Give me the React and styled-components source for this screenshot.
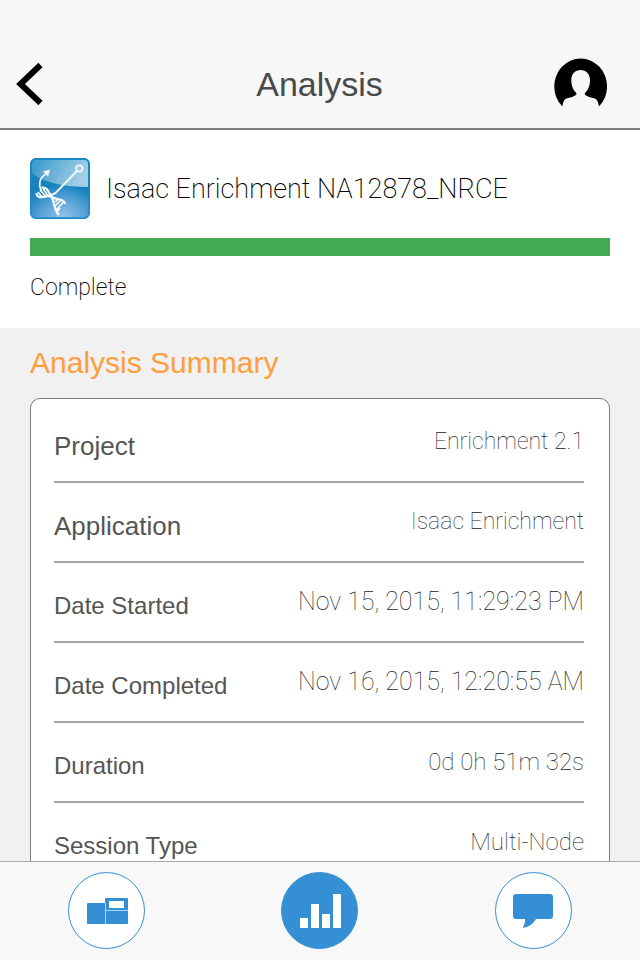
import React from 'react';
import styled, { createGlobalStyle } from 'styled-components';

const details = [
  { label: 'Project', value: 'Enrichment 2.1', kind: 'name' },
  { label: 'Application', value: 'Isaac Enrichment', kind: 'name' },
  { label: 'Date Started', value: 'Nov 15, 2015, 11:29:23 PM', kind: 'date' },
  { label: 'Date Completed', value: 'Nov 16, 2015, 12:20:55 AM', kind: 'date' },
  { label: 'Duration', value: '0d 0h 51m 32s', kind: 'text' },
  { label: 'Session Type', value: 'Multi-Node', kind: 'text' },
];

const valueSizes = { name: '23px', date: '25px', text: '24px' };

export default function App() {
  return (
    <Screen>
      <GlobalStyle />

      <Header>
        <HeaderButton aria-label="Back">
          <BackIcon />
        </HeaderButton>
        <Title>Analysis</Title>
        <HeaderButton aria-label="Account">
          <AccountIcon />
        </HeaderButton>
      </Header>

      <Content>
        <Overview>
          <AppRow>
            <EnrichmentIcon />
            <AppName>Isaac Enrichment NA12878_NRCE</AppName>
          </AppRow>
          <Progress
            role="progressbar"
            aria-label="Analysis progress"
            aria-valuenow={100}
          />
          <Status>Complete</Status>
        </Overview>

        <Summary>
          <SummaryTitle>Analysis Summary</SummaryTitle>
          <Card>
            {details.map(({ label, value, kind }) => (
              <Row key={label}>
                <Label $large={kind === 'name'}>{label}</Label>
                <Value $kind={kind}>{value}</Value>
              </Row>
            ))}
          </Card>
        </Summary>
      </Content>

      <TabBar>
        <Tab aria-label="Instruments">
          <InstrumentIcon />
        </Tab>
        <Tab aria-label="Analyses" $active>
          <ChartIcon />
        </Tab>
        <Tab aria-label="Messages">
          <MessageIcon />
        </Tab>
      </TabBar>
    </Screen>
  );
}

function BackIcon() {
  return (
    <svg width="28" height="44" viewBox="0 0 28 44">
      <path
        d="M24.500 4 L4.500 23 L24.500 42"
        fill="none"
        stroke="#000"
        strokeWidth="6"
      />
    </svg>
  );
}

function AccountIcon() {
  return (
    <svg width="53" height="50" viewBox="0 0 53 50">
      <path d="M8.300 48.600 A26.400 28 0 1 1 45 48.600 C44.500 45 43.500 42 41.500 40.800 C38 39.500 33.500 39.300 31 36.600 C30.600 35.800 30.800 35 31.600 34.300 C34.500 31.500 36 27 36 22.500 C36 15.500 32 12 26.600 12 C21.200 12 17.300 15.500 17.300 22.500 C17.300 27 18.800 31.500 21.600 34.300 C22.500 35 22.700 35.800 22.200 36.600 C19.700 39.300 15.200 39.500 11.800 40.800 C9.800 42 8.800 45 8.300 48.600 Z" />
    </svg>
  );
}

function EnrichmentIcon() {
  return (
    <svg width="60" height="61" viewBox="0 0 60 61">
      <defs>
        <linearGradient id="tile" x1="0" y1="0" x2="0" y2="1">
          <stop offset="0" stopColor="#1b8cc4" />
          <stop offset="0.5" stopColor="#1682bd" />
          <stop offset="1" stopColor="#3f92ce" />
        </linearGradient>
        <radialGradient id="glow" cx="0.55" cy="1" r="0.6">
          <stop offset="0" stopColor="#9cc8ee" stopOpacity="0.9" />
          <stop offset="1" stopColor="#9cc8ee" stopOpacity="0" />
        </radialGradient>
        <linearGradient id="gloss" x1="0" y1="0" x2="1" y2="0.3">
          <stop offset="0" stopColor="#fff" stopOpacity="0.12" />
          <stop offset="1" stopColor="#fff" stopOpacity="0.6" />
        </linearGradient>
      </defs>
      <rect width="60" height="61" rx="6" fill="url(#tile)" />
      <rect x="2" y="2" width="56" height="57" rx="5" fill="url(#glow)" />
      <path
        d="M6 2 H54 Q58 2 58 6 V29 C35 29 14 25 2 15 V6 Q2 2 6 2 Z"
        fill="url(#gloss)"
      />
      <rect
        x="0.500"
        y="0.500"
        width="59"
        height="60"
        rx="6"
        fill="none"
        stroke="#1a88c6"
      />
      <g fill="none" stroke="#f4f6f8" strokeWidth="1.800">
        <circle cx="49.300" cy="10.500" r="3.200" />
        <path d="M47 13 L26 34.500 Q23 37.500 19 36" />
        <path d="M11.500 33 C8 27 9 20 16.500 15.500" strokeWidth="1.600" />
      </g>
      <path d="M20 11.500 L12.500 13.500 L16 15.500 L18 19 Z" fill="#f4f6f8" />
      <g fill="none" stroke="#fff" strokeWidth="2.200">
        <path d="M6.500 35 C7 42 14 38 19 38 C26 39 22 51 29 57" />
        <path d="M11.500 29.500 C19 29 18 36 22 39 C26 42 34 40 35 46" />
        <path
          d="M8 34 L12 39 M10 32 L16 38.500 M13 30.500 L18 38 M25.500 44 L28 41 M25 48 L31 42 M26 52 L33.500 44 M27 54 L30 50"
          strokeWidth="1.500"
        />
      </g>
    </svg>
  );
}

function InstrumentIcon() {
  return (
    <svg width="42" height="26" viewBox="0 0 42 26">
      <rect x="1" y="5" width="20" height="21" rx="1" fill="#348fd4" />
      <rect x="19" y="0" width="23" height="26" rx="1" fill="#348fd4" />
      <rect x="23" y="3" width="15" height="7" fill="#fff" />
      <path
        d="M19.500 5 V26 M19 12.500 H42"
        stroke="#fff"
        strokeOpacity="0.6"
      />
    </svg>
  );
}

function ChartIcon() {
  return (
    <svg width="42" height="36" viewBox="0 0 42 36" fill="#fff">
      <rect x="1" y="25" width="8" height="10" />
      <rect x="12" y="11" width="8" height="24" />
      <rect x="23" y="21" width="8" height="14" />
      <rect x="34" y="1" width="8" height="34" />
    </svg>
  );
}

function MessageIcon() {
  return (
    <svg width="42" height="36" viewBox="0 0 42 36">
      <path
        d="M4 1 H38 Q41 1 41 4 V23 Q41 26 38 26 H24 C21 31 17 34 10.500 35 C12.500 32 13.500 29 13 26 H4 Q1 26 1 23 V4 Q1 1 4 1 Z"
        fill="#348fd4"
      />
    </svg>
  );
}

const GlobalStyle = createGlobalStyle`
  * {
    box-sizing: border-box;
  }

  body {
    margin: 0;
    font-family: 'Liberation Sans', Arial, sans-serif;
    background-color: #f1f1f1;
  }
`;

const Screen = styled.div`
  display: flex;
  flex-direction: column;
  height: 100vh;
`;

const Header = styled.header`
  display: flex;
  align-items: center;
  justify-content: space-between;
  flex-shrink: 0;
  padding: 58px 33px 20px 16px;
  background-color: #f7f7f7;
  border-bottom: 2px solid #7d7d7d;
`;

const HeaderButton = styled.button`
  display: flex;
  flex: 1;
  padding: 0;
  border: 0;
  background: none;
  cursor: pointer;

  &:last-child {
    justify-content: flex-end;
  }
`;

const Title = styled.h1`
  margin: 0;
  padding: 2px 0 0 16px;
  color: #4a4a4a;
  font-size: 34px;
  font-weight: 400;
  line-height: 40px;
`;

const Content = styled.main`
  flex: 1;
  min-height: 0;
  overflow-y: auto;
  scrollbar-width: none;
`;

const Overview = styled.section`
  padding: 28px 30px 24px;
  background-color: #fff;
`;

const AppRow = styled.div`
  display: flex;
  align-items: center;
  gap: 16px;

  svg {
    flex-shrink: 0;
  }
`;

const AppName = styled.h2`
  margin: 0;
  color: #000;
  font-family: Roboto, 'Liberation Sans', sans-serif;
  font-size: 27px;
  font-weight: 200;
  line-height: 36px;
`;

const Progress = styled.div`
  height: 18px;
  margin-top: 19px;
  background-color: #44aa55;
`;

const Status = styled.p`
  margin: 16px 0 0;
  color: #000;
  font-family: Roboto, 'Liberation Sans', sans-serif;
  font-size: 23px;
  font-weight: 200;
  line-height: 32px;
`;

const Summary = styled.section`
  padding: 16px 30px 30px;
  background-color: #f1f1f1;
`;

const SummaryTitle = styled.h2`
  margin: 0 0 16px;
  color: #ff9e3b;
  font-size: 30px;
  font-weight: 400;
  line-height: 38px;
`;

const Card = styled.dl`
  margin: 0;
  padding: 4px 25px 0 23px;
  border: 1px solid #7d7d7d;
  border-radius: 10px;
  background-color: #fff;
`;

const Row = styled.div`
  display: flex;
  justify-content: space-between;
  height: 80px;
  border-bottom: 2px solid #a6a6a6;

  &:last-child {
    border-bottom: 0;
  }
`;

const Label = styled.dt`
  padding-top: 27px;
  color: #555;
  font-size: ${({ $large }) => ($large ? '26px' : '24px')};
  line-height: 32px;
`;

const Value = styled.dd`
  margin: 0;
  padding-top: 23px;
  color: #222;
  font-family: Roboto, 'Liberation Sans', sans-serif;
  font-size: ${({ $kind }) => valueSizes[$kind]};
  font-weight: 100;
  line-height: 32px;
`;

const TabBar = styled.nav`
  display: grid;
  grid-template-columns: repeat(3, 1fr);
  justify-items: center;
  flex-shrink: 0;
  padding: 10px 0 11px;
  border-top: 1px solid #aaa;
  background-color: #f8f8f8;
`;

const Tab = styled.button`
  display: flex;
  align-items: center;
  justify-content: center;
  width: 77px;
  height: 77px;
  padding: 0;
  border: 1px solid #348fd4;
  border-radius: 50%;
  background-color: ${({ $active }) => ($active ? '#348fd4' : '#fff')};
  cursor: pointer;
`;
